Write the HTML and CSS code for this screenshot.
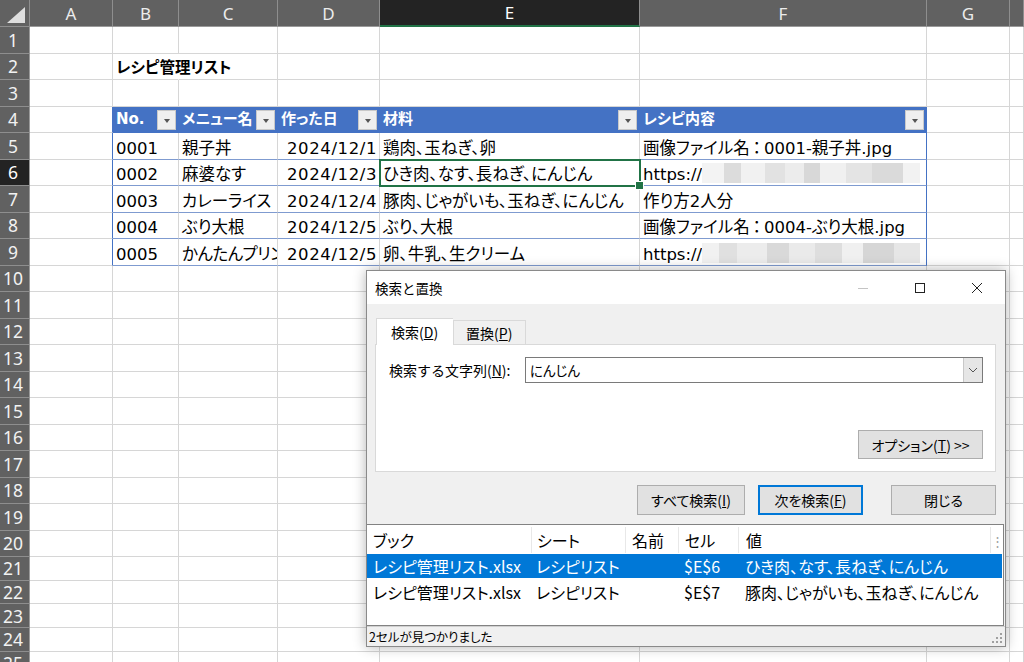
FILE: index.html
```html
<!DOCTYPE html>
<html lang="ja">
<head>
<meta charset="utf-8">
<title>レシピ管理リスト - 検索と置換</title>
<link rel="stylesheet" href="styles.css">
</head>
<body>
<div class="sheet">
  <div class="row head">
    <div class="corner"><span class="tri"></span></div>
    <div class="ch">A</div><div class="ch">B</div><div class="ch">C</div><div class="ch">D</div>
    <div class="ch sel">E</div><div class="ch">F</div><div class="ch">G</div><div class="ch"></div>
  </div>
  <div class="row"><div class="rh">1</div><div class="c"></div><div class="c"></div><div class="c"></div><div class="c"></div><div class="c"></div><div class="c"></div><div class="c"></div><div class="c"></div></div>
  <div class="row"><div class="rh">2</div><div class="c"></div><div class="c ov title">レシピ管理リスト</div><div class="c"></div><div class="c"></div><div class="c"></div><div class="c"></div><div class="c"></div><div class="c"></div></div>
  <div class="row"><div class="rh">3</div><div class="c"></div><div class="c"></div><div class="c"></div><div class="c"></div><div class="c"></div><div class="c"></div><div class="c"></div><div class="c"></div></div>
  <div class="row">
    <div class="rh">4</div><div class="c tl"></div>
    <div class="c th"><span>No.</span><span class="fb"></span></div>
    <div class="c th"><span>メニュー名</span><span class="fb"></span></div>
    <div class="c th"><span>作った日</span><span class="fb"></span></div>
    <div class="c th"><span>材料</span><span class="fb"></span></div>
    <div class="c th last"><span>レシピ内容</span><span class="fb"></span></div>
    <div class="c"></div><div class="c"></div>
  </div>
  <div class="row">
    <div class="rh">5</div><div class="c tl"></div>
    <div class="c td">0001</div><div class="c td">親子丼</div><div class="c td num">2024/12/1</div>
    <div class="c td">鶏肉、玉ねぎ、卵</div><div class="c td last">画像ファイル名<span class="colon">：</span>0001-親子丼.jpg</div>
    <div class="c"></div><div class="c"></div>
  </div>
  <div class="row">
    <div class="rh sel">6</div><div class="c tl"></div>
    <div class="c td">0002</div><div class="c td">麻婆なす</div><div class="c td num">2024/12/3</div>
    <div class="c td active">ひき肉、なす、長ねぎ、にんじん</div><div class="c td last">https://<span class="blur b1"></span></div>
    <div class="c"></div><div class="c"></div>
  </div>
  <div class="row">
    <div class="rh">7</div><div class="c tl"></div>
    <div class="c td">0003</div><div class="c td">カレーライス</div><div class="c td num">2024/12/4</div>
    <div class="c td">豚肉、じゃがいも、玉ねぎ、にんじん</div><div class="c td last">作り方2人分</div>
    <div class="c"></div><div class="c"></div>
  </div>
  <div class="row">
    <div class="rh">8</div><div class="c tl"></div>
    <div class="c td">0004</div><div class="c td">ぶり大根</div><div class="c td num">2024/12/5</div>
    <div class="c td">ぶり、大根</div><div class="c td last">画像ファイル名<span class="colon">：</span>0004-ぶり大根.jpg</div>
    <div class="c"></div><div class="c"></div>
  </div>
  <div class="row">
    <div class="rh">9</div><div class="c tl"></div>
    <div class="c td">0005</div><div class="c td narrow">かんたんプリン</div><div class="c td num">2024/12/5</div>
    <div class="c td">卵、牛乳、生クリーム</div><div class="c td last">https://<span class="blur b2"></span></div>
    <div class="c"></div><div class="c"></div>
  </div>
  <div class="row"><div class="rh">10</div><div class="c"></div><div class="c"></div><div class="c"></div><div class="c"></div><div class="c"></div><div class="c"></div><div class="c"></div><div class="c"></div></div>
  <div class="row"><div class="rh">11</div><div class="c"></div><div class="c"></div><div class="c"></div><div class="c"></div><div class="c"></div><div class="c"></div><div class="c"></div><div class="c"></div></div>
  <div class="row"><div class="rh">12</div><div class="c"></div><div class="c"></div><div class="c"></div><div class="c"></div><div class="c"></div><div class="c"></div><div class="c"></div><div class="c"></div></div>
  <div class="row"><div class="rh">13</div><div class="c"></div><div class="c"></div><div class="c"></div><div class="c"></div><div class="c"></div><div class="c"></div><div class="c"></div><div class="c"></div></div>
  <div class="row"><div class="rh">14</div><div class="c"></div><div class="c"></div><div class="c"></div><div class="c"></div><div class="c"></div><div class="c"></div><div class="c"></div><div class="c"></div></div>
  <div class="row"><div class="rh">15</div><div class="c"></div><div class="c"></div><div class="c"></div><div class="c"></div><div class="c"></div><div class="c"></div><div class="c"></div><div class="c"></div></div>
  <div class="row"><div class="rh">16</div><div class="c"></div><div class="c"></div><div class="c"></div><div class="c"></div><div class="c"></div><div class="c"></div><div class="c"></div><div class="c"></div></div>
  <div class="row"><div class="rh">17</div><div class="c"></div><div class="c"></div><div class="c"></div><div class="c"></div><div class="c"></div><div class="c"></div><div class="c"></div><div class="c"></div></div>
  <div class="row"><div class="rh">18</div><div class="c"></div><div class="c"></div><div class="c"></div><div class="c"></div><div class="c"></div><div class="c"></div><div class="c"></div><div class="c"></div></div>
  <div class="row"><div class="rh">19</div><div class="c"></div><div class="c"></div><div class="c"></div><div class="c"></div><div class="c"></div><div class="c"></div><div class="c"></div><div class="c"></div></div>
  <div class="row"><div class="rh">20</div><div class="c"></div><div class="c"></div><div class="c"></div><div class="c"></div><div class="c"></div><div class="c"></div><div class="c"></div><div class="c"></div></div>
  <div class="row short"><div class="rh">21</div><div class="c"></div><div class="c"></div><div class="c"></div><div class="c"></div><div class="c"></div><div class="c"></div><div class="c"></div><div class="c"></div></div>
  <div class="row short"><div class="rh">22</div><div class="c"></div><div class="c"></div><div class="c"></div><div class="c"></div><div class="c"></div><div class="c"></div><div class="c"></div><div class="c"></div></div>
  <div class="row short"><div class="rh">23</div><div class="c"></div><div class="c"></div><div class="c"></div><div class="c"></div><div class="c"></div><div class="c"></div><div class="c"></div><div class="c"></div></div>
  <div class="row short"><div class="rh">24</div><div class="c"></div><div class="c"></div><div class="c"></div><div class="c"></div><div class="c"></div><div class="c"></div><div class="c"></div><div class="c"></div></div>
  <div class="row short"><div class="rh">25</div><div class="c"></div><div class="c"></div><div class="c"></div><div class="c"></div><div class="c"></div><div class="c"></div><div class="c"></div><div class="c"></div></div>
</div>

<div class="dialog">
  <div class="titlebar">
    <span class="dtitle">検索と置換</span>
    <div class="winbtns">
      <span class="wb"><svg width="12" height="12" viewBox="0 0 12 12"><path d="M1 6.5h10" stroke="#c4c4c4" stroke-width="1"/></svg></span>
      <span class="wb"><svg width="12" height="12" viewBox="0 0 12 12"><rect x="1.5" y="1.5" width="9" height="9" fill="none" stroke="#222" stroke-width="1"/></svg></span>
      <span class="wb"><svg width="12" height="12" viewBox="0 0 12 12"><path d="M1 1l10 10M11 1L1 11" stroke="#222" stroke-width="1"/></svg></span>
    </div>
  </div>
  <div class="dbody">
    <div class="tabs">
      <span class="tab active">検索(<u>D</u>)</span>
      <span class="tab">置換(<u>P</u>)</span>
    </div>
    <div class="panel">
      <div class="findrow">
        <span class="flabel">検索する文字列(<u>N</u>):</span>
        <div class="combo">
          <span class="cval">にんじん</span>
          <span class="drop"><svg width="10" height="6" viewBox="0 0 10 6"><path d="M1 1l4 4 4-4" fill="none" stroke="#555" stroke-width="1"/></svg></span>
        </div>
      </div>
      <div class="optrow"><button class="btn opt">オプション(<u>T</u>) &gt;&gt;</button></div>
    </div>
    <div class="btnrow">
      <button class="btn all">すべて検索(<u>I</u>)</button>
      <button class="btn next">次を検索(<u>F</u>)</button>
      <button class="btn close">閉じる</button>
    </div>
  </div>
  <div class="results">
    <div class="rrow rhead">
      <span class="k1">ブック</span><span class="k2">シート</span><span class="k3">名前</span><span class="k4">セル</span><span class="k5">値</span><span class="k6">⋮</span>
    </div>
    <div class="rrow hit">
      <span class="k1">レシピ管理リスト.xlsx</span><span class="k2">レシピリスト</span><span class="k3"></span><span class="k4">$E$6</span><span class="k5">ひき肉、なす、長ねぎ、にんじん</span><span class="k6"></span>
    </div>
    <div class="rrow">
      <span class="k1">レシピ管理リスト.xlsx</span><span class="k2">レシピリスト</span><span class="k3"></span><span class="k4">$E$7</span><span class="k5">豚肉、じゃがいも、玉ねぎ、にんじん</span><span class="k6"></span>
    </div>
  </div>
  <div class="status">
    <span>2セルが見つかりました</span>
    <svg class="grip" width="10" height="10" viewBox="0 0 10 10"><g fill="#a0a0a0"><rect x="8" y="0" width="2" height="2"/><rect x="4" y="4" width="2" height="2"/><rect x="8" y="4" width="2" height="2"/><rect x="0" y="8" width="2" height="2"/><rect x="4" y="8" width="2" height="2"/><rect x="8" y="8" width="2" height="2"/></g></svg>
  </div>
</div>
</body>
</html>
```

FILE: styles.css
```css
* { box-sizing: border-box; margin: 0; padding: 0; }
html, body { width: 1024px; height: 662px; overflow: hidden; background: #fff; }
body {
  position: relative;
  font-family: "DejaVu Sans", "Noto Sans CJK JP", sans-serif;
  color: #000;
}

/* ---------- sheet ---------- */
.sheet { display: flex; flex-direction: column; }
.row {
  display: grid;
  grid-template-columns: 30px 83px 66px 99px 102px 260px 287px 83px 14px;
  height: 26.5px;
  flex: none;
}
.row.head { height: 27px; }
.row.short { height: 23.7px; }

.corner {
  background: #616161;
  border-right: 1px solid #8e8e8e;
  border-bottom: 1px solid #8e8e8e;
  position: relative;
}
.tri {
  position: absolute;
  right: 4px; bottom: 3px;
  width: 0; height: 0;
  border-left: 18px solid transparent;
  border-bottom: 16px solid #dedede;
}
.ch {
  background: #616161;
  color: #ececec;
  font-family: "Noto Sans", sans-serif;
  font-size: 17px;
  display: flex; align-items: center; justify-content: center;
  border-right: 1px solid #8e8e8e;
  border-bottom: 1px solid #9a9a9a;
}
.ch.sel { background: #232323; border-bottom: 2px solid #217346; color: #fff; }

.rh {
  background: #616161;
  color: #f2f2f2;
  font-family: "Noto Sans", sans-serif;
  font-size: 17.5px;
  display: flex; align-items: center; justify-content: center;
  padding-right: 3px;
  border-right: 1px solid #9a9a9a;
  border-bottom: 1px solid #8e8e8e;
  overflow: hidden;
}
.rh.sel { background: #232323; color: #fff; }

.c {
  border-right: 1px solid #d6d6d6;
  border-bottom: 1px solid #d6d6d6;
  font-size: 16.5px;
  font-feature-settings: "palt";
  white-space: nowrap;
  overflow: hidden;
  display: flex; align-items: flex-end;
  padding: 0 3px 0 3px;
  line-height: 21px;
}
.c.ov { overflow: visible; border-right-color: transparent; }
.c.narrow { letter-spacing: -0.5px; }
.title { font-weight: bold; font-size: 15.5px; }
.colon { padding: 0 3px; }

.c.tl { border-right-color: #4472c4; }
.th {
  background: #4472c4;
  color: #fff;
  font-weight: bold;
  font-size: 15px;
  border-right-color: #4472c4;
  border-bottom-color: #4472c4;
  justify-content: space-between;
  align-items: center;
  padding: 1px 2px 0 3px;
}
.fb {
  flex: none;
  width: 19px; height: 20px;
  background: #efefef;
  border: 1px solid #c9c9c9;
  display: flex; align-items: center; justify-content: center;
  padding-top: 2px;
}
.fb::before {
  content: "";
  border-left: 3.5px solid transparent;
  border-right: 3.5px solid transparent;
  border-top: 4px solid #555;
}
.td { border-bottom-color: #7f9bd0; }
.th.last, .td.last { border-right-color: #4472c4; }
.td.num { justify-content: flex-end; padding-right: 2px; letter-spacing: 0.6px; }
.td.active {
  position: relative;
  overflow: visible;
  outline: 2px solid #217346;
  outline-offset: -1px;
  z-index: 2;
}
.td.active::after {
  content: "";
  position: absolute;
  right: -5px; bottom: -5px;
  width: 7px; height: 7px;
  background: #217346;
  border: 1px solid #fff;
}
.blur {
  display: inline-block;
  flex: none;
  height: 20px;
  width: 218px;
  margin-bottom: 2px;
}
.b1 {
  background: linear-gradient(90deg,
    #f3f3f3 0 10%, #dcdcdc 10% 18%, #f1f1f1 18% 29%, #e2e2e2 29% 38%,
    #ececec 38% 47%, #d8d8d8 47% 54%, #f0f0f0 54% 66%, #e4e4e4 66% 78%,
    #dadada 78% 92%, #f2f2f2 92% 100%);
}
.b2 {
  background: linear-gradient(90deg,
    #f1f1f1 0 8%, #e0e0e0 8% 16%, #ececec 16% 30%, #d9d9d9 30% 40%,
    #eaeaea 40% 52%, #dedede 52% 64%, #f0f0f0 64% 74%, #d6d6d6 74% 88%,
    #e6e6e6 88% 100%);
}

/* ---------- dialog ---------- */
.dialog {
  position: absolute;
  left: 366px; top: 270px;
  width: 640px; height: 377px;
  background: #f0f0f0;
  border: 1px solid #8a8a8a;
  box-shadow: 0 0 12px rgba(0,0,0,0.3);
  display: flex; flex-direction: column;
  font-family: "Noto Sans CJK JP", sans-serif;
  font-size: 14px;
  color: #000;
}
.titlebar {
  height: 33px;
  flex: none;
  background: #fff;
  display: flex; align-items: center; justify-content: space-between;
  padding-left: 8px;
}
.dtitle { font-size: 13.5px; }
.winbtns { display: flex; height: 100%; }
.wb { width: 57px; display: flex; align-items: center; justify-content: center; }

.dbody { padding: 13px 9px 0 8px; display: flex; flex-direction: column; }
.tabs { display: flex; align-items: flex-end; height: 27px; padding-left: 1px; }
.tab {
  height: 24px;
  padding: 0 13px 0 12px;
  border: 1px solid #d9d9d9;
  border-bottom: none;
  display: flex; align-items: center;
  background: #f0f0f0;
}
.tab.active {
  height: 27px;
  background: #fff;
  border-right: none;
  margin-bottom: -1px;
  position: relative;
  z-index: 1;
  padding: 0 15px 0 14px;
}
.panel {
  height: 128px;
  background: #fff;
  border: 1px solid #d9d9d9;
  padding: 12px 12px 12px 12px;
  display: flex; flex-direction: column; justify-content: space-between;
}
.findrow { display: flex; align-items: center; }
.flabel { width: 137px; padding-left: 1px; }
.combo {
  flex: 1;
  height: 26px;
  border: 1px solid #7a7a7a;
  display: flex; align-items: center; justify-content: space-between;
  background: #fff;
}
.cval { padding-left: 4px; font-size: 13.5px; font-feature-settings: "palt"; }
.drop {
  width: 19px; height: 24px;
  background: #e6e6e6;
  border-left: 1px solid #c8c8c8;
  display: flex; align-items: center; justify-content: center;
}
.optrow { display: flex; justify-content: flex-end; }
.btn {
  font-family: "Noto Sans CJK JP", sans-serif;
  font-size: 14px;
  font-feature-settings: "palt";
  color: #000;
  background: #e1e1e1;
  border: 1px solid #adadad;
  height: 30px;
  display: flex; align-items: center; justify-content: center;
}
.btn.opt { width: 125px; height: 29px; }
.btnrow { display: flex; justify-content: flex-end; margin-top: 13px; }
.btn.all { width: 108px; }
.btn.next { width: 105px; margin-left: 13px; border: 2px solid #0078d7; background: #e1e1e1; }
.btn.close { width: 105px; margin-left: 28px; }

.results {
  margin: 9px 1px 0 0;
  height: 103px;
  background: #fff;
  border: 1px solid #828282;
  border-left: none;
  padding-top: 2px;
  font-size: 16px;
  font-feature-settings: "palt";
}
.rrow { display: flex; height: 24px; align-items: center; white-space: nowrap; }
.rrow.rhead { height: 26px; margin-bottom: 1px; }
.rrow span { overflow: hidden; height: 100%; display: flex; align-items: center; }
.k1 { width: 164px; padding-left: 6px; }
.k2 { width: 94px; padding-left: 5px; }
.k3 { width: 53px; padding-left: 6px; }
.k4 { width: 60px; padding-left: 6px; }
.k5 { width: 252px; padding-left: 7px; }
.k6 { flex: 1; justify-content: center; color: #a0a0a0; font-size: 13px; }
.rhead span + span { border-left: 1px solid #e8e8e8; }
.rrow.hit { background: #0078d7; color: #fff; margin-right: 1px; }
.rrow + .rrow:not(.hit) { margin-top: 2px; }

.status {
  flex: 1;
  display: flex; align-items: center; justify-content: space-between;
  padding: 0 3px 0 2px;
  font-size: 12.5px;
  font-feature-settings: "palt";
  border-top: 1px solid #d0d0d0;
}
.grip { align-self: flex-end; margin-bottom: 3px; }
```
